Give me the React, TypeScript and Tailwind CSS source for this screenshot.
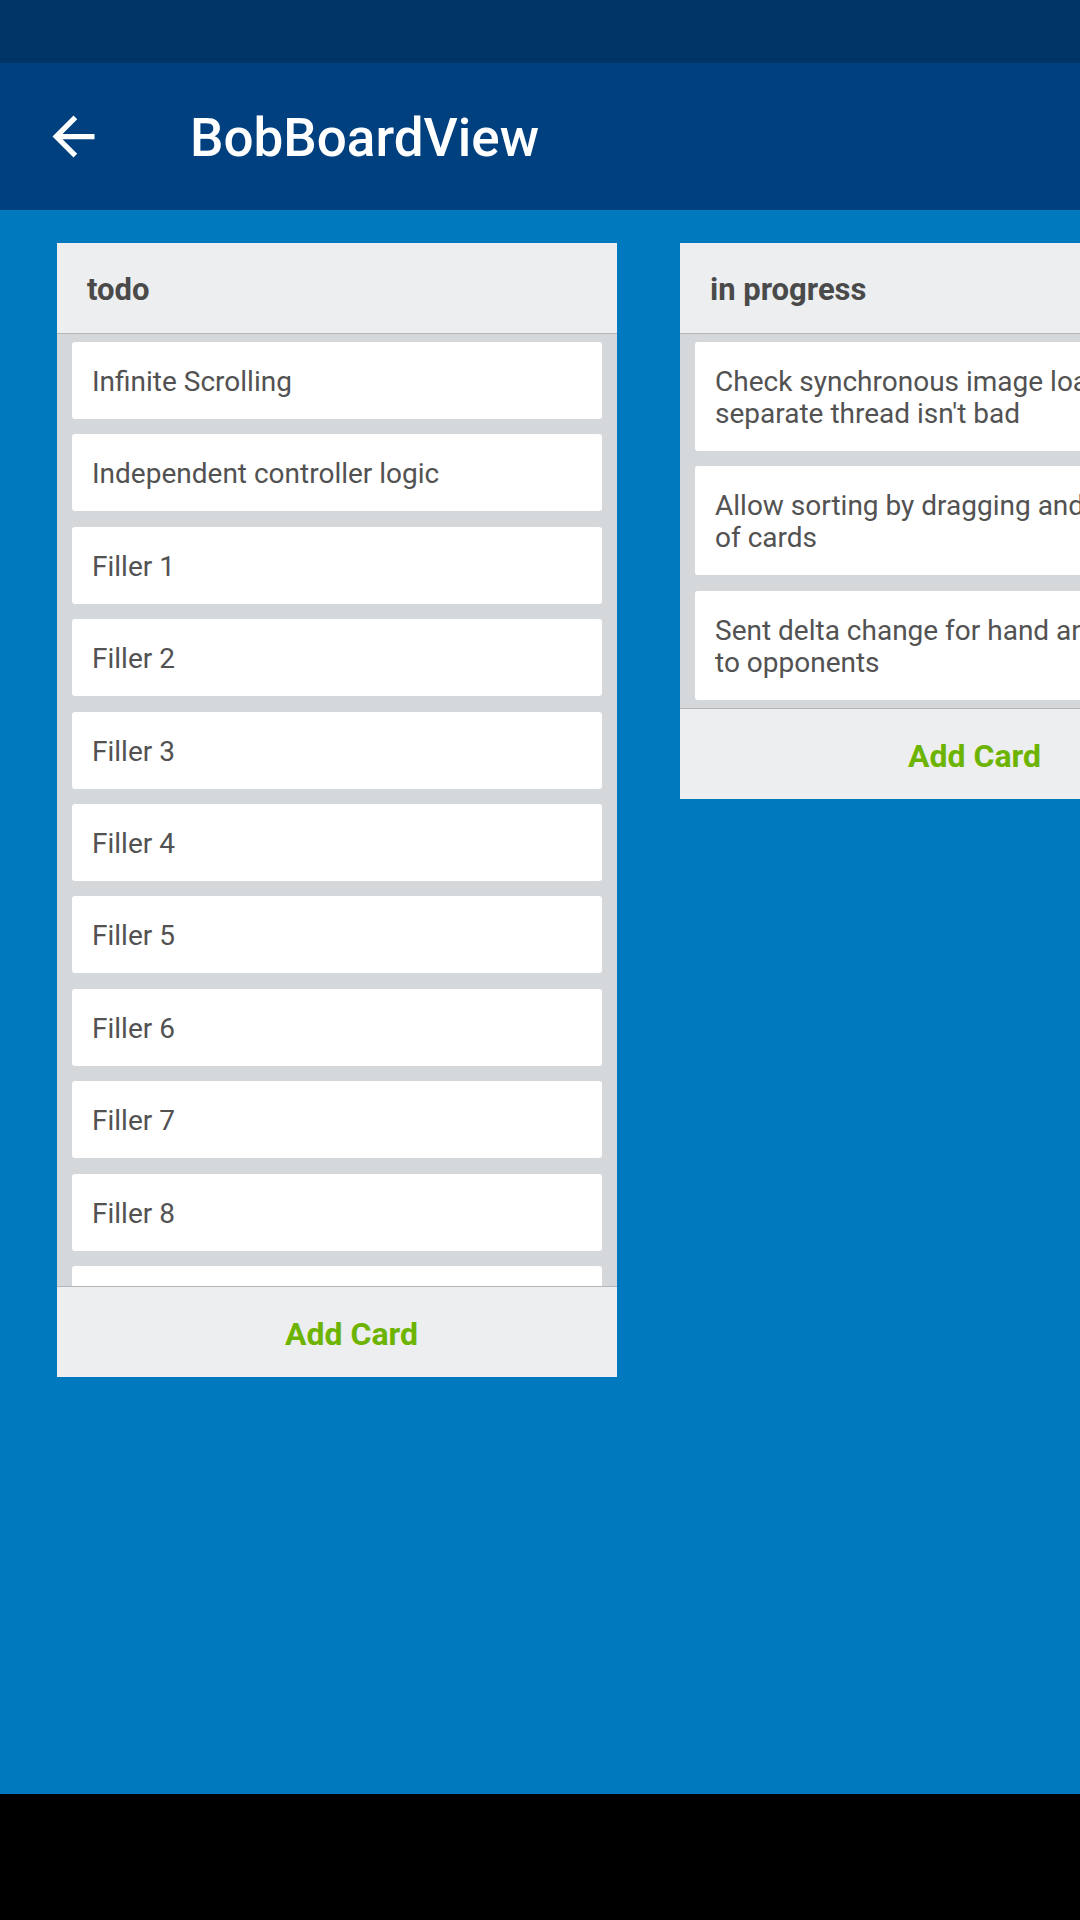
type Column = {
  title: string;
  cards: string[];
  clip?: boolean;
};

const columns: Column[] = [
  {
    title: "todo",
    clip: true,
    cards: [
      "Infinite Scrolling",
      "Independent controller logic",
      "Filler 1",
      "Filler 2",
      "Filler 3",
      "Filler 4",
      "Filler 5",
      "Filler 6",
      "Filler 7",
      "Filler 8",
      "Filler 9",
      "Filler 10",
    ],
  },
  {
    title: "in progress",
    cards: [
      "Check synchronous image loading in\nseparate thread isn't bad",
      "Allow sorting by dragging and dropping\nof cards",
      "Sent delta change for hand and board\nto opponents",
    ],
  },
];

function BoardColumn({ column }: { column: Column }) {
  return (
    <section className="flex w-[560px] shrink-0 flex-col">
      {/* Header */}
      <div className="flex h-[91px] items-center border-b border-[#B4B7BA] bg-[#ECEEF0] pt-[4px] pl-[30px] text-[31px] font-bold text-[#4A4A4A]">
        {column.title}
      </div>

      {/* Cards */}
      <div
        className={
          column.clip
            ? "flex h-[952px] flex-col gap-[15.4px] overflow-hidden bg-[#D5D8DB] px-[15px] pt-[8px]"
            : "flex flex-col gap-[15.4px] bg-[#D5D8DB] px-[15px] pt-[8px] pb-[8px]"
        }
      >
        {column.cards.map((card) => (
          <div
            key={card}
            className="shrink-0 overflow-hidden whitespace-pre rounded-[3px] bg-white pt-[24px] pb-[21px] pl-[20px] text-[28px] leading-[32px] text-[#525252]"
          >
            {card}
          </div>
        ))}
      </div>

      {/* Footer */}
      <button className="flex h-[91px] items-center justify-center border-t border-[#B4B7BA] bg-[#ECEEF0] pt-[4px] pl-[29px] text-[32px] font-bold text-[#6DB400]">
        Add Card
      </button>
    </section>
  );
}

export default function App() {
  return (
    <div className="flex h-[1920px] w-[1080px] flex-col overflow-hidden font-['Roboto',sans-serif]">
      {/* Status bar */}
      <div className="h-[63px] shrink-0 bg-[#003366]" />

      {/* App bar */}
      <header className="flex h-[147px] shrink-0 items-center bg-[#00407F]">
        <button className="ml-[42px] flex h-[63px] w-[63px] items-center justify-center text-white">
          <svg viewBox="0 0 24 24" className="h-[63px] w-[63px]" fill="currentColor">
            <path d="M20 11H7.83l5.59-5.59L12 4l-8 8 8 8 1.41-1.41L7.83 13H20v-2z" />
          </svg>
        </button>
        <h1 className="mt-[4px] ml-[85px] text-[53px] font-medium text-white">BobBoardView</h1>
      </header>

      {/* Board */}
      <main className="flex flex-1 items-start gap-[63px] overflow-hidden bg-[#0079BF] pt-[33px] pl-[57px]">
        {columns.map((column) => (
          <BoardColumn key={column.title} column={column} />
        ))}
      </main>

      {/* Nav bar */}
      <div className="h-[126px] shrink-0 bg-black" />
    </div>
  );
}
